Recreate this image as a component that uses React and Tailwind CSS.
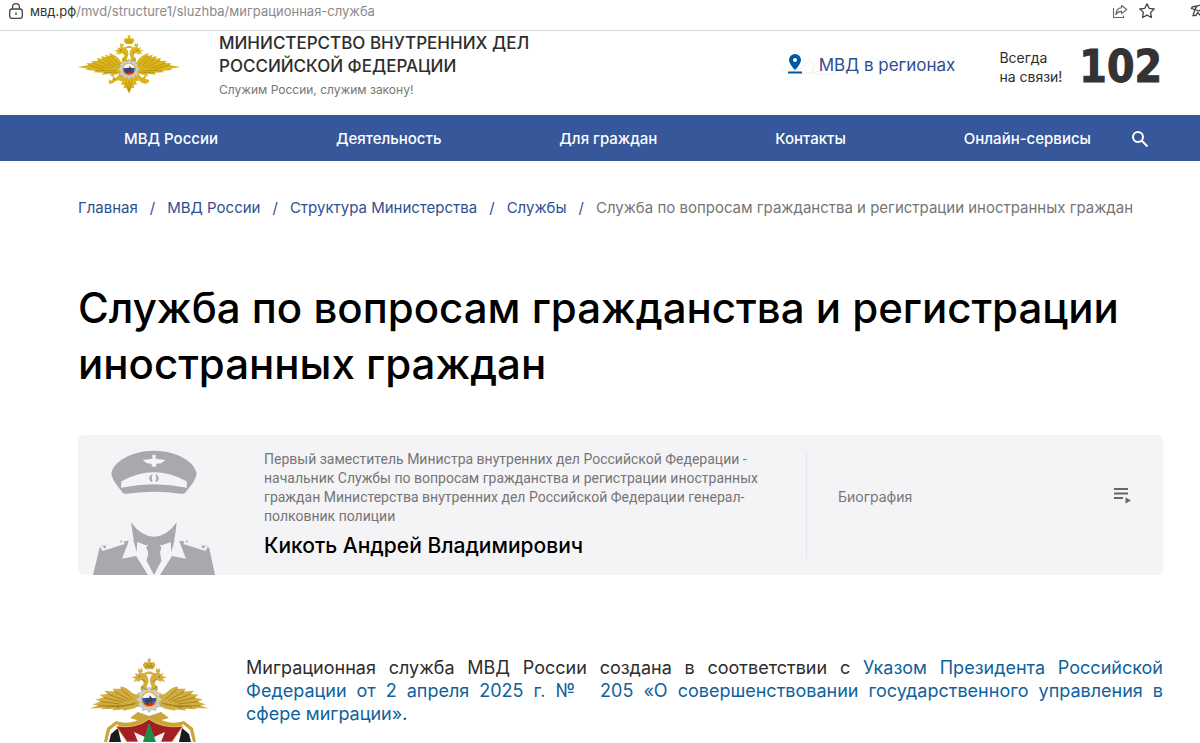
import React from "react";

const navItems = ["МВД России", "Деятельность", "Для граждан", "Контакты", "Онлайн-сервисы"];
const crumbs = ["Главная", "МВД России", "Структура Министерства", "Службы"];

const SPREAD = {
  shape:
    "M160 112 C150 92 138 80 118 76 L122 84 L106 80 L111 88 L94 84 L99 92 L82 90 L86 98 L64 99 L70 105 L50 106 L56 111 L24 117 L54 122 L48 126 L78 128 L72 133 L102 134 L96 140 L124 137 L120 144 L146 138 L160 134 Z",
  feathers:
    "M122 84 L150 112 M111 88 L142 116 M99 92 L134 118 M86 98 L126 120 M70 105 L116 123 M56 111 L104 125 M78 128 L140 128 M102 134 L144 133",
};
const LOWERED = {
  shape:
    "M158 112 L140 110 C130 104 124 92 105 91 L108 97 L86 97 L91 104 L66 102 L74 110 L54 112 L64 119 L44 124 L56 129 L37 136 L50 139 L29 146 L62 145 L58 148 L88 147 L86 151 L114 148 L112 152 L140 146 L158 136 Z",
  feathers:
    "M108 97 L138 124 M91 104 L130 126 M74 110 L122 128 M64 119 L114 131 M56 129 L106 135 M50 139 L104 140 M70 143 L140 136 M96 145 L146 132",
};

function Half({ fill, line, wing }) {
  return (
    <g fill={fill}>
      <path d={wing.shape} />
      <path d={wing.feathers} stroke={line} strokeWidth="1.8" fill="none" />
      <path d="M174 112 L160 104 C154 98 156 90 163 86 C166 80 162 75 155 76 L148 82 L150 76 L138 80 L144 72 L134 68 L146 65 L142 58 L151 60 L154 54 L160 59 C171 58 177 68 176 80 L172 92 L176 104 Z" />
      <path d="M150 53 L152 45 L156 50 L160 44 L162 54 L156 58 Z" />
      <circle cx="153" cy="67" r="1.6" fill="#5b4710" />
      <path d="M160 72 L168 80 M158 92 L168 98" stroke={line} strokeWidth="2" fill="none" />
    </g>
  );
}

function Eagle({ fill, line, tail, wing }) {
  return (
    <g>
      {tail && (
        <g fill={fill}>
          <path d="M158 142 L148 158 L158 160 L154 170 L164 170 L162 180 L170 180 L178 197 L186 180 L194 180 L192 170 L202 170 L198 160 L208 158 L198 142 Z" />
          <path d="M150 138 L138 150 L130 150 L126 158 L116 154 L120 164 L130 166 L136 160 L150 156 L160 144 Z" />
          <path d="M206 138 L218 150 L228 140 L232 142 L226 152 L238 156 L238 162 L228 168 L216 164 L196 146 Z" />
          <path d="M122 128 L136 156" stroke={line} strokeWidth="3" />
          <circle cx="122" cy="164" r="4" />
          <path d="M168 160 L178 188 L188 160 M178 158 L178 190" stroke={line} strokeWidth="1.8" fill="none" />
        </g>
      )}
      <Half fill={fill} line={line} wing={wing} />
      <g transform="translate(356 0) scale(-1 1)">
        <Half fill={fill} line={line} wing={wing} />
      </g>
      <path fill={fill} d="M168 48 L162 38 L166 30 L174 32 L175 27 L172 24 L177 24 L177 20 L180 20 L180 24 L184 24 L181 27 L182 32 L190 30 L194 38 L188 48 Z" />
      <path d="M168 42 L188 42 M172 32 L175 41 M184 32 L181 41" stroke={line} strokeWidth="1.8" />
      <path fill={fill} d="M158 56 Q166 60 174 54 L182 54 Q190 60 198 56 L192 64 Q178 56 164 64 Z" />
      <path
        fill="#cfcfc4"
        stroke="#8e8b78"
        strokeWidth="1"
        d="M178 92 L184 101 L194 96 L196 106 L207 108 L203 117 L212 124 L203 131 L207 141 L196 142 L194 152 L184 148 L178 156 L172 148 L162 152 L160 142 L149 141 L153 131 L144 124 L153 117 L149 108 L160 106 L162 96 L172 101 Z"
      />
      <circle cx="178" cy="124" r="20" fill="#d9a827" />
      <circle cx="178" cy="124" r="17.5" fill="#f5f5f7" />
      <path d="M161 120 H195 A17.5 17.5 0 0 1 193 132 H163 A17.5 17.5 0 0 1 161 120 Z" fill="#2c55a5" />
      <path d="M163 132 H193 A17.5 17.5 0 0 1 163 132 Z" fill="#c92a2a" />
      <path d="M168 131 L172 119 L177 121 L180 114 L184 119 L188 123 L184 127 L186 134 L180 130 L174 136 Z" fill="#39445c" />
    </g>
  );
}

function HeaderEmblem() {
  return (
    <svg viewBox="22 18 312 182" className="w-[104px] shrink-0" role="img" aria-label="Герб МВД">
      <Eagle fill="#dcb51c" line="#a8840c" wing={SPREAD} tail />
    </svg>
  );
}

function ServiceEmblem() {
  return (
    <svg viewBox="0 0 140 86" className="w-[140px] shrink-0" role="img" aria-label="Эмблема службы">
      <path d="M26 86 L29 72 L38 65 C48 68 58 67 64 61 L79 61 C86 67 96 68 106 65 L115 72 L118 86 Z" fill="#caa53a" />
      <path d="M29 86 L32 74 L39 68 L56 86 Z" fill="#fff" />
      <path d="M31 86 L33 78 L40 72 L43 86 Z" fill="#1b1b1b" />
      <path d="M115 86 L112 74 L105 68 L88 86 Z" fill="#fff" />
      <path d="M113 86 L111 78 L104 72 L101 86 Z" fill="#1b1b1b" />
      <path d="M38 70 C50 72 62 70 71 63 C80 70 94 72 105 70 L94 86 H49 Z" fill="#a31f23" stroke="#e2c25c" strokeWidth="1" />
      <path d="M56 76 L67 81 L71 68 L76 81 L87 76 L83 86 H60 Z" fill="#f6f4ef" />
      <path d="M71 67 L78 86 H65 Z" fill="#1f8a4c" />
      <path d="M52 62 L60 56 L71 60 L83 56 L91 62 L80 65 L71 62 L62 65 Z" fill="#c9a53c" />
      <g transform="translate(0 -6) scale(0.4)">
        <Eagle fill="#d2ad3f" line="#97741e" wing={LOWERED} />
      </g>
    </svg>
  );
}

function Officer() {
  return (
    <svg viewBox="0 0 180 140" className="w-[180px] shrink-0 self-end" role="img" aria-label="Фото">
      <g transform="translate(0 -5) scale(0.33333)">
        <path d="M100 132 C104 96 160 62 228 62 C296 62 352 96 356 132 C350 158 334 170 322 188 Q318 192 308 191 Q228 180 148 191 Q138 192 134 188 C122 170 106 158 100 132 Z" fill="#a7a9ac" />
        <path d="M130 154 Q228 100 326 154 L327 173 Q228 152 129 173 Z" fill="#f4f4f7" />
        <path d="M223 74 H233 V86 L262 90 L250 100 L236 101 L233 110 H223 L220 101 L206 100 L194 90 L223 86 Z" fill="#f4f4f7" />
        <path d="M222 132 Q206 144 220 156 L224 154 Q218 144 224 134 Z M234 132 Q250 144 236 156 L232 154 Q238 144 232 134 Z" fill="#a7a9ac" />
        <path d="M45 435 L64 356 Q68 346 80 346 L160 330 L159 277 Q190 320 228 320 Q266 320 296 277 L296 330 L376 346 Q388 346 394 356 L411 435 Z" fill="#a7a9ac" />
        <path d="M66 350 L134 330 L140 342 L74 363 Z M390 350 L322 330 L316 342 L382 363 Z" fill="#f4f4f7" />
        <path d="M76 347 l9 0 l-2 8 l-6 0 Z M126 331 l7 2 l-4 6 Z M380 347 l-9 0 l2 8 l6 0 Z M330 331 l-7 2 l4 6 Z" fill="#a7a9ac" />
        <path d="M160 300 L166 330 L176 366 L178 336 L204 346 L212 344 L208 358 L212 374 L206 392 L228 428 L250 392 L244 374 L248 358 L244 344 L252 346 L278 336 L280 366 L290 330 L296 300 L306 340 L324 386 L282 378 L246 435 H210 L174 378 L132 386 L150 340 Z" fill="#f4f4f7" />
        <path d="M159 276 L167 330 L152 332 L158 305 Z M297 276 L289 330 L304 332 L298 305 Z" fill="#f4f4f7" />
        <path d="M212 344 H244 L250 352 L246 366 L250 392 L228 435 L206 392 L212 366 L204 352 Z" fill="#a7a9ac" />
      </g>
    </svg>
  );
}

function AddressBar() {
  return (
    <div className="flex h-[31px] items-start justify-between overflow-hidden border-b border-[#cdd6d8] pl-2 pt-[2px]">
      <div className="flex items-center gap-1">
        <svg viewBox="0 0 16 18" className="h-[18px] w-4" fill="none" stroke="#444" strokeWidth="1.3" aria-hidden="true">
          <rect x="1.7" y="7" width="12.6" height="9.4" rx="2.4" />
          <path d="M4.6 7 V5 a3.4 3.4 0 0 1 6.8 0 V7 M8 10.4 V13" />
        </svg>
        <a href="#address" className="ml-[2px] text-[13px] leading-[18px] text-[#8a8a8a]">
          <span className="text-[#333]">мвд.рф</span>/mvd/structure1/sluzhba/миграционная-служба
        </a>
      </div>
      <div className="flex shrink-0 items-center pt-px">
        <button aria-label="Поделиться" className="mr-[11px]">
          <svg viewBox="0 0 16 16" className="size-4" fill="none" stroke="#666" strokeWidth="1.1" strokeLinejoin="round">
            <path d="M1.5 5 V14.5 H11.5 V12.5" />
            <path d="M9.5 2.5 L14.8 6.5 L9.5 10.6 V8.4 C7 8.2 5.2 9.2 3.8 11.6 C4 7.6 6 5 9.5 4.8 Z" />
          </svg>
        </button>
        <button aria-label="В избранное" className="mr-[35px]">
          <svg viewBox="0 0 16 16" className="size-4" fill="none" stroke="#444" strokeWidth="1.3" strokeLinejoin="round">
            <path d="M8 .9 L10.2 5.3 L15.2 6 L11.6 9.4 L12.5 14.5 L8 12.1 L3.5 14.5 L4.4 9.4 L.8 6 L5.8 5.3 Z" />
          </svg>
        </button>
        <button aria-label="Расширения" className="w-[10px] overflow-hidden">
          <svg viewBox="0 0 16 16" className="size-4 max-w-none" fill="none" stroke="#444" strokeWidth="1.3">
            <path d="M12 1.5 L7 3 L2 4 L1.5 5.5 L5 6.5 L3 12.5 H6 L7.5 9.5 L12 14 M7 3 L5 6.5 L9 8 L12 6" />
          </svg>
        </button>
      </div>
    </div>
  );
}

export default function App() {
  return (
    <div className="overflow-x-hidden bg-white font-['Inter','Noto_Sans',sans-serif] text-[#2d2d2d]">
      <AddressBar />
      <header className="flex items-start justify-between pb-4 pl-[77px] pr-[38px]">
        <div className="flex items-start">
          <a href="#home" className="pt-[3px]">
            <HeaderEmblem />
          </a>
          <div className="ml-[38px] pt-px">
            <p className="text-[17px] font-medium leading-[23px]">
              МИНИСТЕРСТВО ВНУТРЕННИХ ДЕЛ
              <br />
              РОССИЙСКОЙ ФЕДЕРАЦИИ
            </p>
            <p className="mt-[3px] text-xs leading-[18px] text-[#757575]">Служим России, служим закону!</p>
          </div>
        </div>
        <div className="flex items-center pt-2">
          <a href="#regions" className="relative flex items-center gap-4 pb-[2px] text-[17px] text-[#2f4f91]">
            <svg viewBox="0 0 178 24" className="absolute -left-2 top-0 h-6 w-[178px]" fill="none" stroke="#f0f0f0" aria-hidden="true">
              <path d="M2 16 L10 20 L24 14 L30 6 L36 12 L32 20 L50 22 L62 16 L70 20 M92 4 L102 8 L98 14 M120 12 L134 6 L146 10 L156 3 L164 8 L176 4 L170 14 L158 16 L150 20 M20 21 L44 18" />
            </svg>
            <svg viewBox="0 0 16 22" className="relative mb-1 h-[22px] w-4" aria-hidden="true">
              <path fillRule="evenodd" d="M8 1 A6 6 0 0 0 2 7 C2 11 8 17 8 17 S14 11 14 7 A6 6 0 0 0 8 1 Z M8 5 A2 2 0 1 1 8 9 A2 2 0 0 1 8 5 Z" fill="#0059a5" />
              <path d="M1 18.5 H15 V20.5 H1 Z" fill="#0059a5" />
            </svg>
            <span className="relative">МВД в регионах</span>
          </a>
          <p className="ml-11 text-sm leading-[19px]">
            Всегда
            <br />
            на связи!
          </p>
          <strong className="ml-[17px] font-['DejaVu_Sans_Condensed','Inter',sans-serif] text-[44px] font-bold leading-[56px] text-[#333] [-webkit-text-stroke:1px_#333]">
            102
          </strong>
        </div>
      </header>

      <nav className="flex h-[46px] items-center bg-[#36579a] pl-[124px] pr-[51px] pt-[2px] text-[15px] font-medium text-white">
        <div className="flex flex-1 justify-between">
          {navItems.map((t) => (
            <a key={t} href="#nav">{t}</a>
          ))}
        </div>
        <button aria-label="Поиск" className="ml-10">
          <svg viewBox="0 0 18 18" className="size-[18px]" fill="none" stroke="#fff" strokeWidth="2">
            <circle cx="7" cy="7" r="5" />
            <path d="M10.8 10.8 L16.5 16.5" />
          </svg>
        </button>
      </nav>

      <main className="pl-[78px] pr-[37px]">
        <nav className="pt-[35px] text-[15px] leading-6 text-[#2f4f91]">
          {crumbs.map((t) => (
            <React.Fragment key={t}>
              <a href="#crumb">{t}</a>
              <span className="mx-3">/</span>
            </React.Fragment>
          ))}
          <span className="text-[#757575]">Служба по вопросам гражданства и регистрации иностранных граждан</span>
        </nav>

        <h1 className="mt-[60px] text-[42px] font-medium leading-[56px] text-black">
          Служба по вопросам гражданства и регистрации иностранных граждан
        </h1>

        <section className="mt-[43px] flex min-h-[140px] items-stretch rounded-md bg-[#f4f4f7]">
          <Officer />
          <div className="ml-[6px] flex-1 pt-[15px]">
            <p className="max-w-[515px] font-['Roboto',sans-serif] text-sm leading-[19px] text-[#757575]">
              Первый заместитель Министра внутренних дел Российской Федерации - начальник Службы по вопросам гражданства и
              регистрации иностранных граждан Министерства внутренних дел Российской Федерации генерал-полковник полиции
            </p>
            <h2 className="mt-[6px] text-[21px] font-medium leading-7 text-black">Кикоть Андрей Владимирович</h2>
          </div>
          <a
            href="#bio"
            className="my-4 flex w-[357px] items-center justify-between border-l border-[#e6e6ea] pb-4 pl-[31px] pr-[31px] text-sm text-[#757575]"
          >
            Биография
            <svg viewBox="0 0 18 18" className="size-[18px]" fill="#666" aria-hidden="true">
              <path d="M0 0 H14 V2 H0 Z M0 4.5 H14 V6.5 H0 Z M0 9 H9 V11 H0 Z M11.5 9.5 L17 12.5 L11.5 15.5 Z" />
            </svg>
          </a>
        </section>

        <article className="mt-[81px] flex items-start gap-7">
          <ServiceEmblem />
          <p className="min-w-0 flex-1 text-justify text-lg leading-[23px]">
            Миграционная служба МВД России создана в соответствии с{" "}
            <a href="#decree" className="text-[#0f629b]">
              Указом Президента Российской Федерации от 2 апреля 2025 г. №&nbsp; 205 «О совершенствовании
              государственного управления в сфере&nbsp;миграции»
            </a>
            .
          </p>
        </article>
      </main>
    </div>
  );
}
